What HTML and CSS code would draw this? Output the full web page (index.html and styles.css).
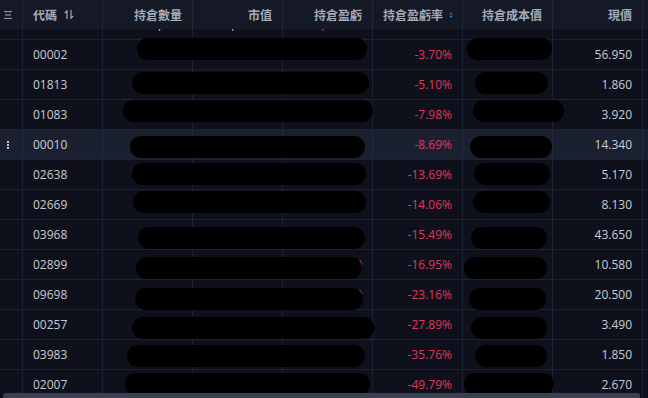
FILE: index.html
```html
<!DOCTYPE html>
<html lang="zh-Hant">
<head>
<meta charset="utf-8">
<title>持倉</title>
<link rel="stylesheet" href="styles.css">
</head>
<body>
<div class="table">
  <div class="grid head">
    <div class="cell icon-cell">
      <svg class="menu-icon" width="9" height="8" viewBox="0 0 9 8"><rect x="0" y="0" width="8" height="1.2" fill="#8a90a0"/><rect x="1" y="3.4" width="6" height="1.2" fill="#8a90a0"/><rect x="0" y="6.8" width="8" height="1.2" fill="#8a90a0"/></svg>
    </div>
    <div class="cell left">代碼
      <svg class="code-sort" width="10" height="9" viewBox="0 0 10 9"><path d="M3 9V0.8L0.8 3" fill="none" stroke="#a5abb8" stroke-width="1.2"/><path d="M7 0V8.2L9.2 6" fill="none" stroke="#a5abb8" stroke-width="1.2"/></svg>
    </div>
    <div class="cell">持倉數量</div>
    <div class="cell">市值</div>
    <div class="cell">持倉盈虧</div>
    <div class="cell">持倉盈虧率
      <svg class="rate-sort" width="6" height="10" viewBox="0 0 6 10"><path d="M3 0.5L5.6 4H0.4Z" fill="#5d6475"/><path d="M3 9.5L5.6 6H0.4Z" fill="#1e8fff"/></svg>
    </div>
    <div class="cell">持倉成本價</div>
    <div class="cell">現價</div>
    <div class="cell"></div>
  </div>
  <div class="body">
    <div class="rows">
      <div class="grid row">
        <div class="cell icon-cell"></div>
        <div class="cell left">00700</div>
        <div class="cell">5,400</div>
        <div class="cell">123,210.00</div>
        <div class="cell red">-1,845.00</div>
        <div class="cell red">-1.52%</div>
        <div class="cell">100.0000</div>
        <div class="cell">1.000</div>
        <div class="cell"></div>
      </div>

      <div class="grid row">
        <div class="cell icon-cell"></div>
        <div class="cell left">00002</div>
        <div class="cell"></div><div class="cell"></div><div class="cell red"></div>
        <div class="cell red">-3.70%</div>
        <div class="cell"></div>
        <div class="cell">56.950</div>
        <div class="cell"></div>
        <span class="pill" style="left:137px;width:230px;top:-2px"></span>
        <span class="pill" style="left:467px;width:85px;top:-2px"></span>
      </div>

      <div class="grid row">
        <div class="cell icon-cell"></div>
        <div class="cell left">01813</div>
        <div class="cell"></div><div class="cell"></div><div class="cell"></div>
        <div class="cell red">-5.10%</div>
        <div class="cell"></div>
        <div class="cell">1.860</div>
        <div class="cell"></div>
        <span class="pill" style="left:132px;width:237px;top:2px"></span>
        <span class="pill" style="left:475px;width:73px;top:2px"></span>
      </div>

      <div class="grid row">
        <div class="cell icon-cell"></div>
        <div class="cell left">01083</div>
        <div class="cell"></div><div class="cell"></div><div class="cell"></div>
        <div class="cell red">-7.98%</div>
        <div class="cell"></div>
        <div class="cell">3.920</div>
        <div class="cell"></div>
        <span class="pill" style="left:123px;width:250px;top:0px"></span>
        <span class="pill" style="left:473px;width:91px;top:0px"></span>
      </div>

      <div class="grid row active">
        <div class="cell icon-cell"><span class="dots"><i></i><i></i><i></i></span></div>
        <div class="cell left">00010</div>
        <div class="cell"></div><div class="cell"></div><div class="cell"></div>
        <div class="cell red">-8.69%</div>
        <div class="cell"></div>
        <div class="cell">14.340</div>
        <div class="cell"></div>
        <span class="pill" style="left:130px;width:235px;top:6px"></span>
        <span class="pill" style="left:470px;width:82px;top:6px"></span>
      </div>

      <div class="grid row">
        <div class="cell icon-cell"></div>
        <div class="cell left">02638</div>
        <div class="cell"></div><div class="cell"></div><div class="cell"></div>
        <div class="cell red">-13.69%</div>
        <div class="cell"></div>
        <div class="cell">5.170</div>
        <div class="cell"></div>
        <span class="pill" style="left:132px;width:234px;top:3px"></span>
        <span class="pill" style="left:474px;width:76px;top:3px"></span>
      </div>

      <div class="grid row">
        <div class="cell icon-cell"></div>
        <div class="cell left">02669</div>
        <div class="cell"></div><div class="cell"></div><div class="cell"></div>
        <div class="cell red">-14.06%</div>
        <div class="cell"></div>
        <div class="cell">8.130</div>
        <div class="cell"></div>
        <span class="pill" style="left:133px;width:233px;top:1px"></span>
        <span class="pill" style="left:473px;width:77px;top:1px"></span>
      </div>

      <div class="grid row">
        <div class="cell icon-cell"></div>
        <div class="cell left">03968</div>
        <div class="cell"></div><div class="cell"></div><div class="cell"></div>
        <div class="cell red">-15.49%</div>
        <div class="cell"></div>
        <div class="cell">43.650</div>
        <div class="cell"></div>
        <span class="pill" style="left:138px;width:227px;top:7px"></span>
        <span class="pill" style="left:471px;width:76px;top:7px"></span>
      </div>

      <div class="grid row">
        <div class="cell icon-cell"></div>
        <div class="cell left">02899</div>
        <div class="cell"></div><div class="cell"></div><div class="cell red">)</div>
        <div class="cell red">-16.95%</div>
        <div class="cell"></div>
        <div class="cell">10.580</div>
        <div class="cell"></div>
        <span class="pill" style="left:136px;width:226px;top:7px"></span>
        <span class="pill" style="left:464px;width:83px;top:7px"></span>
      </div>

      <div class="grid row">
        <div class="cell icon-cell"></div>
        <div class="cell left">09698</div>
        <div class="cell"></div><div class="cell"></div><div class="cell red">)</div>
        <div class="cell red">-23.16%</div>
        <div class="cell"></div>
        <div class="cell">20.500</div>
        <div class="cell"></div>
        <span class="pill" style="left:135px;width:228px;top:8px"></span>
        <span class="pill" style="left:469px;width:77px;top:8px"></span>
      </div>

      <div class="grid row">
        <div class="cell icon-cell"></div>
        <div class="cell left">00257</div>
        <div class="cell"></div><div class="cell"></div><div class="cell"></div>
        <div class="cell red">-27.89%</div>
        <div class="cell"></div>
        <div class="cell">3.490</div>
        <div class="cell"></div>
        <span class="pill" style="left:132px;width:242px;top:7px"></span>
        <span class="pill" style="left:471px;width:76px;top:7px"></span>
      </div>

      <div class="grid row">
        <div class="cell icon-cell"></div>
        <div class="cell left">03983</div>
        <div class="cell"></div><div class="cell"></div><div class="cell"></div>
        <div class="cell red">-35.76%</div>
        <div class="cell"></div>
        <div class="cell">1.850</div>
        <div class="cell"></div>
        <span class="pill" style="left:127px;width:238px;top:5px"></span>
        <span class="pill" style="left:475px;width:72px;top:5px"></span>
      </div>

      <div class="grid row">
        <div class="cell icon-cell"></div>
        <div class="cell left">02007</div>
        <div class="cell"></div><div class="cell"></div><div class="cell"></div>
        <div class="cell red">-49.79%</div>
        <div class="cell"></div>
        <div class="cell">2.670</div>
        <div class="cell"></div>
        <span class="pill" style="left:125px;width:245px;top:3px"></span>
        <span class="pill" style="left:464px;width:90px;top:3px"></span>
      </div>
    </div>
  </div>
  <div class="scrollbar"></div>
</div>
</body>
</html>
```

FILE: styles.css
```css
* { box-sizing: border-box; }

html, body {
  margin: 0;
  padding: 0;
  background: #0e111b;
}

body {
  width: 648px;
  height: 398px;
  overflow: hidden;
  font-family: "Open Sans", "Noto Sans CJK TC", sans-serif;
}

.table {
  position: relative;
  width: 648px;
  height: 398px;
  display: flex;
  flex-direction: column;
  overflow: hidden;
}

.grid {
  display: grid;
  grid-template-columns: 23px 80px 90px 90px 90px 90px 90px 90px 90px;
  width: 743px;
}

.cell {
  display: flex;
  align-items: center;
  justify-content: flex-end;
  padding: 0 10px;
  border-right: 1px solid #1c2231;
  white-space: nowrap;
  overflow: hidden;
}

.cell.left {
  justify-content: flex-start;
}

.cell.icon-cell {
  padding: 0;
  justify-content: flex-start;
}

.head {
  height: 29px;
  flex: none;
  background: #141925;
  color: #a5abb8;
  font-family: "Noto Sans CJK TC", "Noto Sans", sans-serif;
  font-weight: 700;
  font-size: 12px;
  position: relative;
  z-index: 2;
}

.head .cell {
  border-right-color: #20273a;
}

.menu-icon {
  margin-left: 4px;
  margin-top: 1px;
}

.code-sort {
  margin-left: 7px;
}

.rate-sort {
  margin-left: 6px;
  margin-right: -1px;
}

.body {
  flex: 1;
  overflow: hidden;
}

.rows {
  margin-top: -19px;
}

.row {
  position: relative;
  height: 30px;
  border-bottom: 1px solid #1c2231;
  color: #c9ccd4;
  font-size: 12px;
}

.row .cell {
  padding-top: 0;
}

.row.active {
  background: #1b2030;
}

.row.active .cell {
  border-right-color: #262c3d;
}

.red {
  color: #e0365c;
}

.dots {
  display: flex;
  flex-direction: column;
  gap: 1px;
  margin-left: 7px;
}

.dots i {
  display: block;
  width: 2px;
  height: 2px;
  background: #c9ccd4;
}

.pill {
  position: absolute;
  height: 22px;
  border-radius: 11px;
  background: #000;
}

.scrollbar {
  position: absolute;
  left: 3px;
  bottom: 0;
  width: 637px;
  height: 5px;
  border-radius: 3px 3px 0 0;
  background: #3a4050;
  z-index: 3;
}
```
